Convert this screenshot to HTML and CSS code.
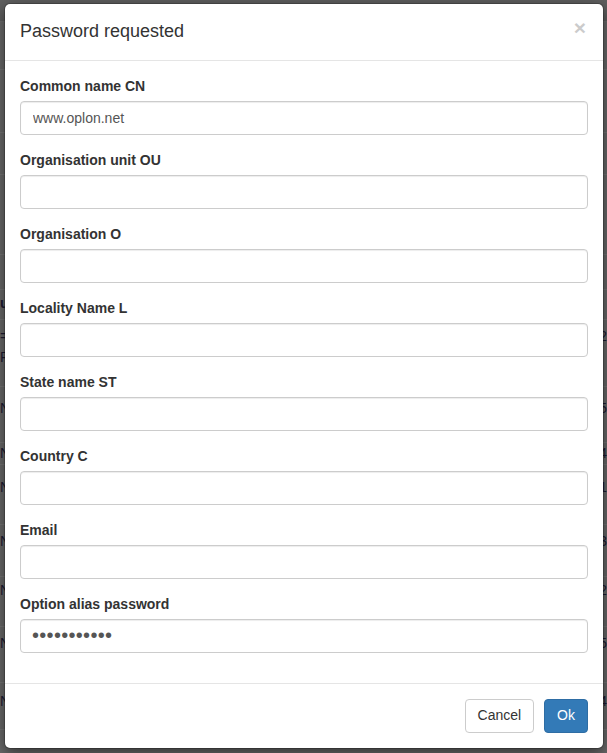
FILE: index.html
```html
<!DOCTYPE html>
<html>
<head>
<meta charset="utf-8">
<link rel="stylesheet" href="styles.css">
</head>
<body>
<div class="page">
  <div class="row r1"></div>
  <div class="row r2"></div>
  <div class="row r3"></div>
  <div class="row r4"></div>
  <div class="row r5"></div>
  <div class="row r6"></div>
  <div class="row r7"><span class="l bold">ul</span><span class="r"></span></div>
  <div class="row r8"><span class="l">=l<br>R</span><span class="r">2</span></div>
  <div class="row r9"><span class="l">N</span><span class="r">5</span></div>
  <div class="row r10"><span class="l">N</span><span class="r">4</span></div>
  <div class="row r11"><span class="l">N</span><span class="r">1</span></div>
  <div class="row r12"><span class="l">N</span><span class="r">3</span></div>
  <div class="row r13"><span class="l">N</span><span class="r">2</span></div>
  <div class="row r14"><span class="l">N</span><span class="r">5</span></div>
  <div class="row r15"><span class="l">N</span><span class="r">4</span></div>
  <div class="row r16"></div>
</div>

<div class="modal">
  <div class="modal-content">
    <div class="modal-header">
      <h4 class="modal-title">Password requested</h4>
      <span class="close">&times;</span>
    </div>
    <form class="modal-body">
      <div class="form-group">
        <label>Common name CN</label>
        <input class="form-control" type="text" value="www.oplon.net">
      </div>
      <div class="form-group">
        <label>Organisation unit OU</label>
        <input class="form-control" type="text">
      </div>
      <div class="form-group">
        <label>Organisation O</label>
        <input class="form-control" type="text">
      </div>
      <div class="form-group">
        <label>Locality Name L</label>
        <input class="form-control" type="text">
      </div>
      <div class="form-group">
        <label>State name ST</label>
        <input class="form-control" type="text">
      </div>
      <div class="form-group">
        <label>Country C</label>
        <input class="form-control" type="text">
      </div>
      <div class="form-group">
        <label>Email</label>
        <input class="form-control" type="text">
      </div>
      <div class="form-group">
        <label>Option alias password</label>
        <input class="form-control pw" type="password" value="12345678901">
      </div>
    </form>
    <div class="modal-footer">
      <button class="btn btn-default" type="button">Cancel</button>
      <button class="btn btn-primary" type="button">Ok</button>
    </div>
  </div>
</div>
</body>
</html>
```

FILE: styles.css
```css
* { box-sizing: border-box; }
html, body { margin: 0; padding: 0; }
body {
  width: 607px;
  height: 753px;
  overflow: hidden;
  background: #6b6b6b;
  font-family: "Liberation Sans", Arial, sans-serif;
  font-size: 14px;
  line-height: 1.42857;
  color: #333;
  position: relative;
}

/* dimmed page behind the dialog */
.page { display: flex; flex-direction: column; }
.row {
  display: flex;
  justify-content: space-between;
  align-items: flex-start;
  border-bottom: 1px solid #777;
  color: #1e1b33;
  font-size: 14px;
  line-height: 21px;
}
.row .l { margin-left: 0; }
.row .r { margin-right: 0; }
.bold { font-weight: bold; }
.r1 { height: 22px; background: #5f5f5f; border-bottom-color: #6f6f6f; }
.r2 { height: 48px; }
.r3 { height: 63px; }
.r4 { height: 42px; }
.r5 { height: 80px; }
.r6 { height: 35px; }
.r7 { height: 30px; padding-top: 3px; }
.r8 { height: 67px; padding-top: 6px; }
.r9 { height: 56px; padding-top: 11px; }
.r10 { height: 22px; padding-top: 0; }
.r11 { height: 60px; padding-top: 12px; }
.r12 { height: 52px; padding-top: 6px; }
.r13 { height: 50px; padding-top: 3px; }
.r14 { height: 56px; padding-top: 6px; }
.r15 { height: 47px; padding-top: 8px; }
.r16 { height: 30px; border-bottom: 0; }

/* modal */
.modal {
  position: absolute;
  left: 4px;
  top: 3px;
  width: 600px;
}
.modal-content {
  background: #fff;
  border: 1px solid rgba(0,0,0,.2);
  border-radius: 6px;
  box-shadow: 0 5px 15px rgba(0,0,0,.5);
  background-clip: padding-box;
}
.modal-header {
  display: flex;
  justify-content: space-between;
  align-items: flex-start;
  padding: 15px;
  border-bottom: 1px solid #e5e5e5;
}
.modal-title {
  margin: 0;
  font-size: 18px;
  font-weight: normal;
  line-height: 1.42857;
  color: #333;
}
.close {
  font-size: 21px;
  font-weight: bold;
  line-height: 1;
  color: #000;
  opacity: .2;
  margin-top: -2px;
  margin-right: 2px;
}
.modal-body {
  display: flex;
  flex-direction: column;
  gap: 15px;
  padding: 15px 15px 30px 15px;
  margin: 0;
}
.form-group {
  display: flex;
  flex-direction: column;
}
label {
  font-weight: bold;
  margin-bottom: 5px;
  line-height: 20px;
  color: #333;
}
.form-control {
  display: block;
  width: 100%;
  height: 34px;
  padding: 6px 12px;
  font-family: "Liberation Sans", Arial, sans-serif;
  font-size: 14px;
  line-height: 1.42857;
  color: #555;
  background: #fff;
  border: 1px solid #ccc;
  border-radius: 4px;
  box-shadow: inset 0 1px 1px rgba(0,0,0,.075);
  margin: 0;
  outline: none;
}
.form-control.pw {
  font-size: 20px;
  line-height: 20px;
  letter-spacing: 0.3px;
  padding-left: 11px;
}
.modal-footer {
  display: flex;
  justify-content: flex-end;
  gap: 10px;
  padding: 15px;
  border-top: 1px solid #e5e5e5;
}
.btn {
  font-family: "Liberation Sans", Arial, sans-serif;
  font-size: 14px;
  line-height: 1.42857;
  height: 34px;
  padding: 6px 12px;
  border-radius: 4px;
  border: 1px solid transparent;
  margin: 0;
}
.btn-default {
  color: #333;
  background: #fff;
  border-color: #ccc;
}
.btn-primary {
  color: #fff;
  background: #337ab7;
  border-color: #2e6da4;
}
```
